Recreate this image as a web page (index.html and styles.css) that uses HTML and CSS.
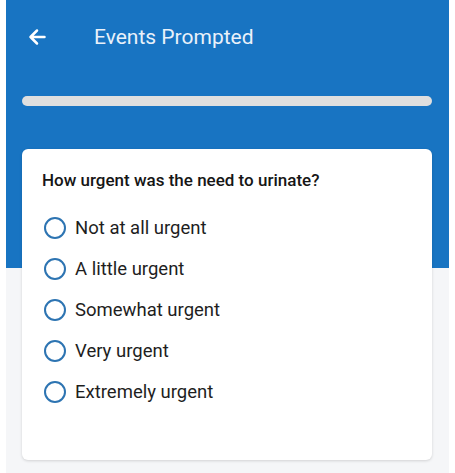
FILE: index.html
```html
<!DOCTYPE html>
<html>
<head>
<meta charset="utf-8">
<link rel="stylesheet" href="styles.css">
</head>
<body>
<div class="app">
  <header class="topbar">
    <button class="back" aria-label="Back">
      <svg width="18" height="18" viewBox="0 0 18 18"><path d="M16.5 9H2.5M9 2.5L2.5 9L9 15.5" fill="none" stroke="#fff" stroke-width="2.5" stroke-linecap="round" stroke-linejoin="round"/></svg>
    </button>
    <h1 class="title">Events Prompted</h1>
  </header>
  <div class="progress"><div class="progress-fill"></div></div>
  <section class="card">
    <p class="question">How urgent was the need to urinate?</p>
    <ul class="options">
      <li class="option"><span class="radio"></span><span class="label">Not at all urgent</span></li>
      <li class="option"><span class="radio"></span><span class="label">A little urgent</span></li>
      <li class="option"><span class="radio"></span><span class="label">Somewhat urgent</span></li>
      <li class="option"><span class="radio"></span><span class="label">Very urgent</span></li>
      <li class="option"><span class="radio"></span><span class="label">Extremely urgent</span></li>
    </ul>
  </section>
</div>
</body>
</html>
```

FILE: styles.css
```css
* { box-sizing: border-box; }
html, body { margin: 0; padding: 0; background: #fff; }
body { font-family: Roboto, "Noto Sans", Arial, sans-serif; }

.app {
  margin: 0 6px;
  height: 473px;
  background: linear-gradient(#1874c2 0, #1874c2 268px, #f5f6f8 268px);
  padding: 0 17px 0 16px;
  display: flex;
  flex-direction: column;
}

.topbar {
  height: 74px;
  display: flex;
  align-items: center;
}
.back {
  background: none;
  border: 0;
  padding: 0;
  margin-left: 6px;
  width: 18px;
  height: 18px;
  display: flex;
}
.title {
  margin: 0 0 0 48px;
  font-size: 21px;
  font-weight: 400;
  color: #e9f1fa;
}

.progress {
  margin-top: 22px;
  height: 10px;
  border-radius: 5px;
  background: #dfdfdf;
}

.card {
  margin-top: 43px;
  height: 311px;
  background: #fff;
  border-radius: 6px;
  box-shadow: 0 1px 3px rgba(0,0,0,0.15);
  padding: 21px 20px 0 20px;
}
.question {
  margin: 0;
  font-size: 17px;
  font-weight: 500;
  color: #161616;
  line-height: 20px;
}
.options {
  list-style: none;
  margin: 27px 0 0 0;
  padding: 0;
  display: flex;
  flex-direction: column;
  gap: 19px;
}
.option {
  display: flex;
  align-items: center;
  height: 22px;
  gap: 9px;
}
.radio {
  width: 22px;
  height: 22px;
  border: 2.5px solid #2d74b2;
  border-radius: 50%;
  margin-left: 2px;
  flex: none;
}
.label {
  font-size: 18.5px;
  color: #1e1e1e;
}
```
